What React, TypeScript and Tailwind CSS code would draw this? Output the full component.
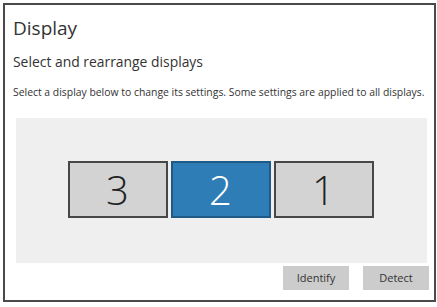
import React from "react";

export default function App() {
  const font = { fontFamily: '"Open Sans", "Noto Sans", sans-serif' };
  return (
    <div className="w-[437px] h-[307px] bg-white pt-[3px] pl-[3px]" style={font}>
      <div className="w-[433px] h-[299px] border-2 border-[#4a4a4a] flex flex-col text-[#333]">
        <div className="pl-[8px] pt-[10px] text-[19px] leading-[27px]">Display</div>
        <div className="pl-[8px] pt-[11px] text-[13.9px] leading-[18px]">Select and rearrange displays</div>
        <div className="pl-[8px] pt-[14px] text-[10.4px] leading-[14px] whitespace-nowrap">
          Select a display below to change its settings. Some settings are applied to all displays.
        </div>
        <div className="ml-[11px] mt-[19px] w-[411px] h-[145px] bg-[#efefef] flex items-center justify-center">
          <div className="flex gap-[3px] -ml-[2px] -mt-[2px]">
            <div className="w-[100px] h-[57px] bg-[#d3d3d3] border-2 border-[#474747] flex items-center justify-center text-[40px] font-light leading-none text-[#222]">3</div>
            <div className="w-[100px] h-[57px] bg-[#2f7db6] border-2 border-[#1f5a86] flex items-center justify-center text-[40px] font-light leading-none text-white">2</div>
            <div className="w-[100px] h-[57px] bg-[#d3d3d3] border-2 border-[#474747] flex items-center justify-center text-[40px] font-light leading-none text-[#222]">1</div>
          </div>
        </div>
        <div className="flex justify-end gap-[14px] mt-[3px] pr-[5px]">
          <div className="w-[66px] h-[24px] bg-[#cccccc] flex items-center justify-center text-[11px] text-[#333]">Identify</div>
          <div className="w-[66px] h-[24px] bg-[#cccccc] flex items-center justify-center text-[11px] text-[#333]">Detect</div>
        </div>
      </div>
    </div>
  );
}
